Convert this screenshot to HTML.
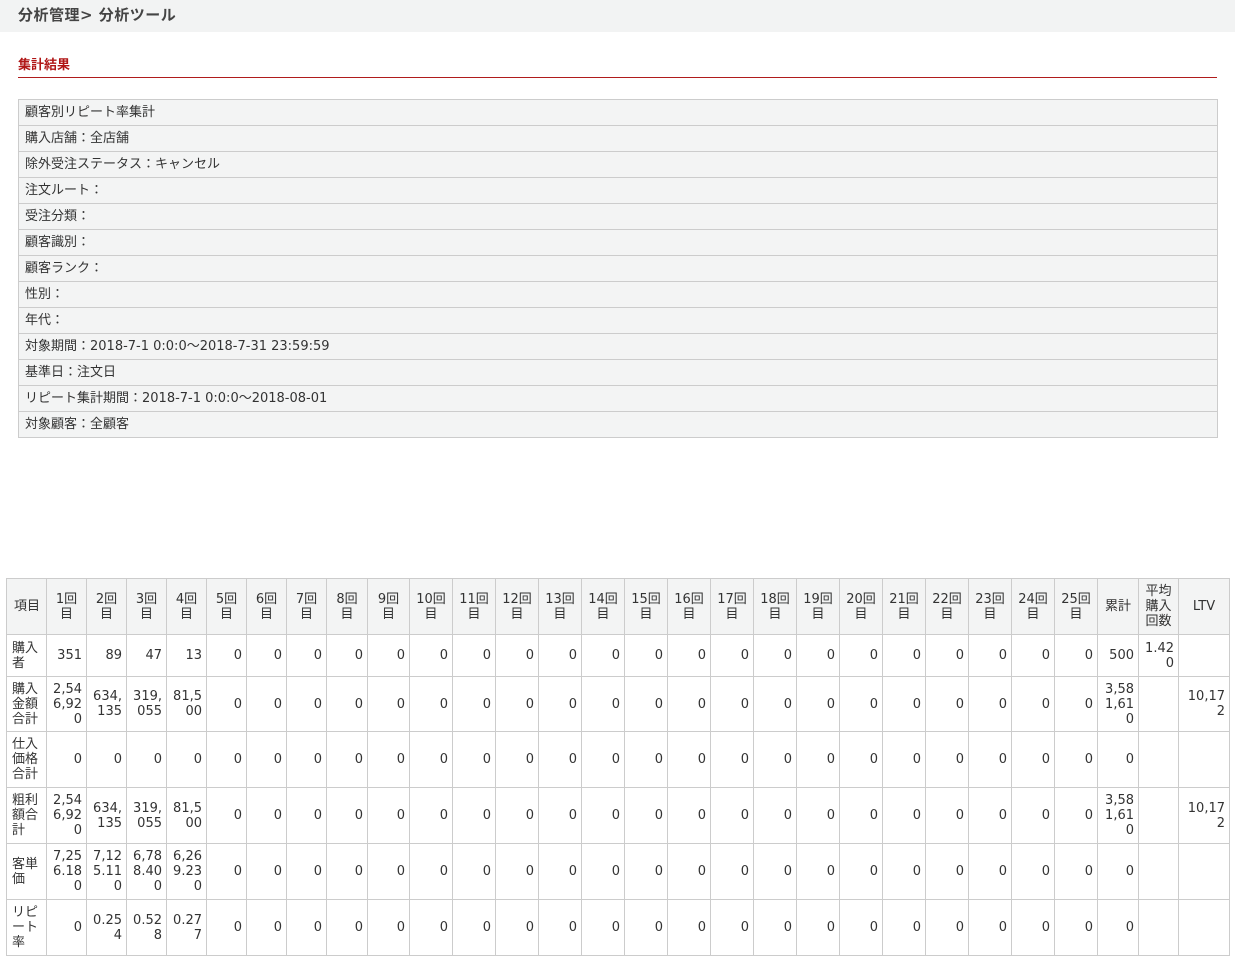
<!DOCTYPE html>
<html><head><meta charset="utf-8"><style>
body{margin:0;background:#fff;font-family:"DejaVu Sans","Noto Sans CJK JP",sans-serif;color:#333;font-size:12px;width:1235px;height:964px;overflow:hidden;position:relative}
.top{height:32px;background:#f2f3f3;}
.top span{position:absolute;left:18px;top:4px;font-size:15px;font-weight:bold;color:#444;letter-spacing:0.5px}
.sec{position:absolute;left:18px;top:54px;color:#b01515;font-weight:bold;font-size:13px}
.line{position:absolute;left:18px;top:77px;width:1199px;height:1px;background:#b01c1c}
.info{position:absolute;left:18px;top:99px;width:1200px;border-collapse:collapse}
.info td{height:25px;line-height:23px;border:1px solid #ccc;background:#f3f4f4;padding:0 0 0 6px;font-size:13px;color:#333;box-sizing:border-box;overflow:hidden;white-space:nowrap}
.info tr{height:26px}
.t{position:absolute;left:6px;top:578px;border-collapse:collapse;table-layout:fixed;width:1223px}
.t td,.t th{border:1px solid #ccc;padding:0 4px 0 2px;line-height:15px;text-align:right;vertical-align:middle;white-space:nowrap;font-size:13px;font-weight:normal}
.t th{background:#f3f4f4;text-align:center;padding:0}
.t td:first-child{text-align:left;padding-left:5px}
.t th:first-child{text-align:left;padding-left:7px}
</style></head><body>
<div class="top"><span>分析管理&gt; 分析ツール</span></div>
<div class="sec">集計結果</div>
<div class="line"></div>
<table class="info">
<tr><td>顧客別リピート率集計</td></tr>
<tr><td>購入店舗：全店舗</td></tr>
<tr><td>除外受注ステータス：キャンセル</td></tr>
<tr><td>注文ルート：</td></tr>
<tr><td>受注分類：</td></tr>
<tr><td>顧客識別：</td></tr>
<tr><td>顧客ランク：</td></tr>
<tr><td>性別：</td></tr>
<tr><td>年代：</td></tr>
<tr><td>対象期間：2018-7-1 0:0:0～2018-7-31 23:59:59</td></tr>
<tr><td>基準日：注文日</td></tr>
<tr><td>リピート集計期間：2018-7-1 0:0:0～2018-08-01</td></tr>
<tr><td>対象顧客：全顧客</td></tr>
</table>
<table class="t">
<colgroup><col style="width:40px"><col style="width:40px"><col style="width:40px"><col style="width:40px"><col style="width:40px"><col style="width:40px"><col style="width:40px"><col style="width:40px"><col style="width:41px"><col style="width:42px"><col style="width:43px"><col style="width:43px"><col style="width:43px"><col style="width:43px"><col style="width:43px"><col style="width:43px"><col style="width:43px"><col style="width:43px"><col style="width:43px"><col style="width:43px"><col style="width:43px"><col style="width:43px"><col style="width:43px"><col style="width:43px"><col style="width:43px"><col style="width:43px"><col style="width:41px"><col style="width:40px"><col style="width:51px"></colgroup>
<tr style="height:56px"><th>項目</th><th>1回<br>目</th><th>2回<br>目</th><th>3回<br>目</th><th>4回<br>目</th><th>5回<br>目</th><th>6回<br>目</th><th>7回<br>目</th><th>8回<br>目</th><th>9回<br>目</th><th>10回<br>目</th><th>11回<br>目</th><th>12回<br>目</th><th>13回<br>目</th><th>14回<br>目</th><th>15回<br>目</th><th>16回<br>目</th><th>17回<br>目</th><th>18回<br>目</th><th>19回<br>目</th><th>20回<br>目</th><th>21回<br>目</th><th>22回<br>目</th><th>23回<br>目</th><th>24回<br>目</th><th>25回<br>目</th><th>累計</th><th>平均<br>購入<br>回数</th><th>LTV</th></tr>
<tr style="height:42px"><td>購入<br>者</td><td>351</td><td>89</td><td>47</td><td>13</td><td>0</td><td>0</td><td>0</td><td>0</td><td>0</td><td>0</td><td>0</td><td>0</td><td>0</td><td>0</td><td>0</td><td>0</td><td>0</td><td>0</td><td>0</td><td>0</td><td>0</td><td>0</td><td>0</td><td>0</td><td>0</td><td>500</td><td>1.42<br>0</td><td></td></tr>
<tr style="height:55px"><td>購入<br>金額<br>合計</td><td>2,54<br>6,92<br>0</td><td>634,<br>135</td><td>319,<br>055</td><td>81,5<br>00</td><td>0</td><td>0</td><td>0</td><td>0</td><td>0</td><td>0</td><td>0</td><td>0</td><td>0</td><td>0</td><td>0</td><td>0</td><td>0</td><td>0</td><td>0</td><td>0</td><td>0</td><td>0</td><td>0</td><td>0</td><td>0</td><td>3,58<br>1,61<br>0</td><td></td><td>10,17<br>2</td></tr>
<tr style="height:56px"><td>仕入<br>価格<br>合計</td><td>0</td><td>0</td><td>0</td><td>0</td><td>0</td><td>0</td><td>0</td><td>0</td><td>0</td><td>0</td><td>0</td><td>0</td><td>0</td><td>0</td><td>0</td><td>0</td><td>0</td><td>0</td><td>0</td><td>0</td><td>0</td><td>0</td><td>0</td><td>0</td><td>0</td><td>0</td><td></td><td></td></tr>
<tr style="height:56px"><td>粗利<br>額合<br>計</td><td>2,54<br>6,92<br>0</td><td>634,<br>135</td><td>319,<br>055</td><td>81,5<br>00</td><td>0</td><td>0</td><td>0</td><td>0</td><td>0</td><td>0</td><td>0</td><td>0</td><td>0</td><td>0</td><td>0</td><td>0</td><td>0</td><td>0</td><td>0</td><td>0</td><td>0</td><td>0</td><td>0</td><td>0</td><td>0</td><td>3,58<br>1,61<br>0</td><td></td><td>10,17<br>2</td></tr>
<tr style="height:56px"><td>客単<br>価</td><td>7,25<br>6.18<br>0</td><td>7,12<br>5.11<br>0</td><td>6,78<br>8.40<br>0</td><td>6,26<br>9.23<br>0</td><td>0</td><td>0</td><td>0</td><td>0</td><td>0</td><td>0</td><td>0</td><td>0</td><td>0</td><td>0</td><td>0</td><td>0</td><td>0</td><td>0</td><td>0</td><td>0</td><td>0</td><td>0</td><td>0</td><td>0</td><td>0</td><td>0</td><td></td><td></td></tr>
<tr style="height:56px"><td>リピ<br>ート<br>率</td><td>0</td><td>0.25<br>4</td><td>0.52<br>8</td><td>0.27<br>7</td><td>0</td><td>0</td><td>0</td><td>0</td><td>0</td><td>0</td><td>0</td><td>0</td><td>0</td><td>0</td><td>0</td><td>0</td><td>0</td><td>0</td><td>0</td><td>0</td><td>0</td><td>0</td><td>0</td><td>0</td><td>0</td><td>0</td><td></td><td></td></tr>
</table>
</body></html>
